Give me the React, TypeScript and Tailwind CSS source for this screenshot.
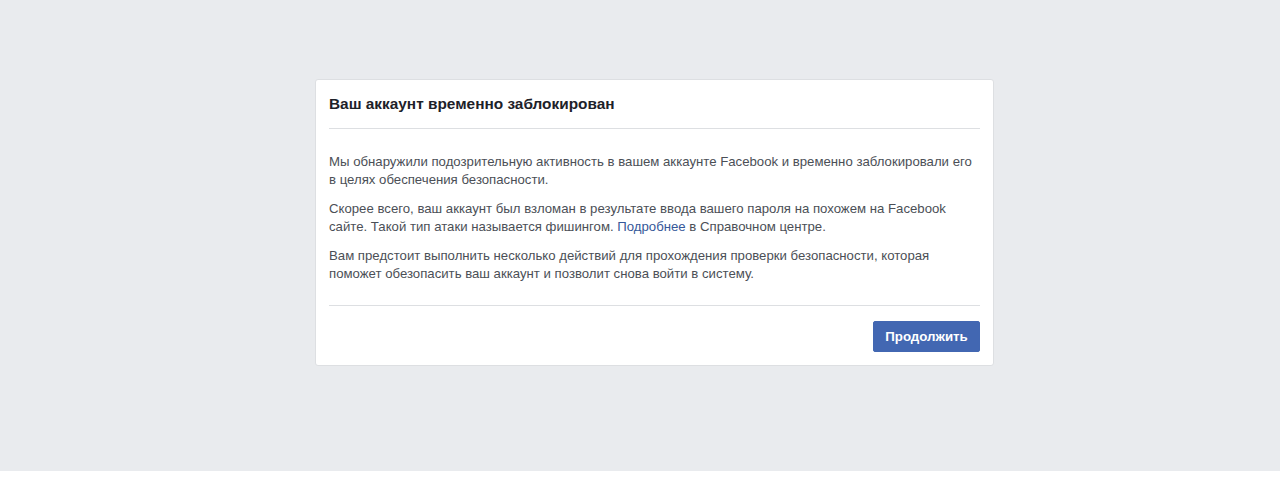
export default function App() {
  return (
    <div className="bg-white min-h-[490px]" style={{ fontFamily: '"Liberation Sans", Arial, Helvetica, sans-serif' }}>
      <div className="bg-[#e9ebee] h-[471px] pt-[79px]">
        <div className="ml-[315px] w-[679px] bg-white border border-[#dddfe2] rounded-[3px] px-[13px]">
          {/* Header */}
          <div className="h-[49px] flex items-center border-b border-[#dddfe2]">
            <h2 className="text-[15.4px] font-bold text-[#1d2129]">Ваш аккаунт временно заблокирован</h2>
          </div>

          {/* Body */}
          <div className="pt-[24px] pb-[22px] border-b border-[#dddfe2] text-[13.2px] leading-[18px] text-[#4b4f56]">
            <p className="mb-[11px]">
              Мы обнаружили подозрительную активность в вашем аккаунте Facebook и временно заблокировали его
              <br />в целях обеспечения безопасности.
            </p>
            <p className="mb-[11px]">
              Скорее всего, ваш аккаунт был взломан в результате ввода вашего пароля на похожем на Facebook
              <br />
              сайте. Такой тип атаки называется фишингом. <a className="text-[#365899]">Подробнее</a> в Справочном центре.
            </p>
            <p>
              Вам предстоит выполнить несколько действий для прохождения проверки безопасности, которая
              <br />
              поможет обезопасить ваш аккаунт и позволит снова войти в систему.
            </p>
          </div>

          {/* Footer */}
          <div className="flex justify-end pt-[15px] pb-[13px]">
            <button className="h-[31px] w-[107px] bg-[#4267b2] border border-[#4267b2] rounded-[2px] text-white text-[13.3px] font-bold">
              Продолжить
            </button>
          </div>
        </div>
      </div>
    </div>
  );
}
